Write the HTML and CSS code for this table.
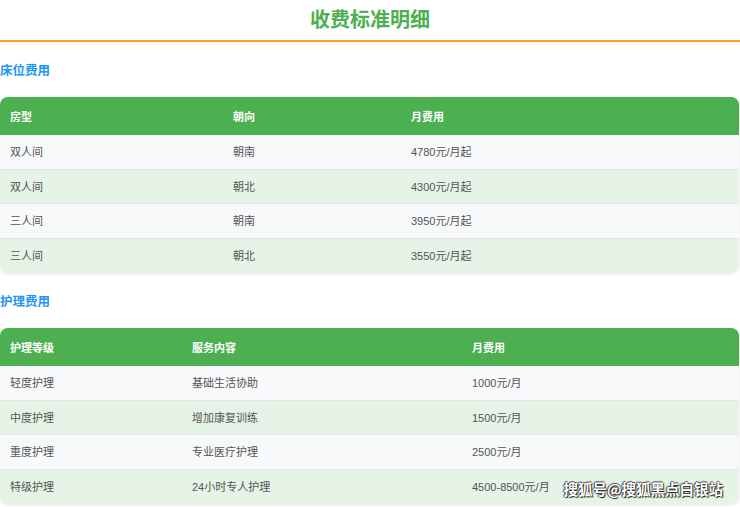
FILE: index.html
```html
<!DOCTYPE html>
<html lang="zh-CN">
<head>
<meta charset="utf-8">
<title>收费标准明细</title>
<link rel="stylesheet" href="styles.css">
</head>
<body>
<div class="page">
  <h1 class="title">收费标准明细</h1>

  <h2 class="section">床位费用</h2>
  <table class="fee">
    <colgroup><col class="c1a"><col class="c1b"><col class="c1c"></colgroup>
    <thead>
      <tr><th>房型</th><th>朝向</th><th>月费用</th></tr>
    </thead>
    <tbody>
      <tr><td>双人间</td><td>朝南</td><td>4780元/月起</td></tr>
      <tr><td>双人间</td><td>朝北</td><td>4300元/月起</td></tr>
      <tr><td>三人间</td><td>朝南</td><td>3950元/月起</td></tr>
      <tr><td>三人间</td><td>朝北</td><td>3550元/月起</td></tr>
    </tbody>
  </table>

  <h2 class="section">护理费用</h2>
  <table class="fee">
    <colgroup><col class="c2a"><col class="c2b"><col class="c2c"></colgroup>
    <thead>
      <tr><th>护理等级</th><th>服务内容</th><th>月费用</th></tr>
    </thead>
    <tbody>
      <tr><td>轻度护理</td><td>基础生活协助</td><td>1000元/月</td></tr>
      <tr><td>中度护理</td><td>增加康复训练</td><td>1500元/月</td></tr>
      <tr><td>重度护理</td><td>专业医疗护理</td><td>2500元/月</td></tr>
      <tr><td>特级护理</td><td>24小时专人护理</td><td>4500-8500元/月</td></tr>
    </tbody>
  </table>

  <div class="watermark">搜狐号@搜狐黑点白银站</div>
</div>
</body>
</html>
```

FILE: styles.css
```css
html, body {
  margin: 0;
  padding: 0;
  background: #ffffff;
}

body {
  font-family: "Liberation Sans", "Noto Sans CJK SC", sans-serif;
  color: #555555;
}

.page {
  position: relative;
  width: 740px;
  height: 507px;
  overflow: hidden;
}

.title {
  margin: 0;
  padding: 5px 0 8px;
  font-family: "Noto Sans CJK SC", sans-serif;
  font-size: 20px;
  line-height: 27px;
  font-weight: 700;
  color: #4caf50;
  text-align: center;
  border-bottom: 2px solid #f5a32b;
}

.section {
  margin: 19px 0 18px;
  font-family: "Noto Sans CJK SC", sans-serif;
  font-size: 12.5px;
  line-height: 18px;
  font-weight: 700;
  color: #2196f3;
}

.fee {
  width: 739px;
  border-collapse: separate;
  border-spacing: 0;
  border-radius: 8px;
  overflow: hidden;
  box-shadow: 0 1px 3px rgba(0, 0, 0, 0.10);
  font-size: 11px;
  table-layout: fixed;
}

.c1a { width: 223px; }
.c1b { width: 178px; }
.c1c { width: auto; }
.c2a { width: 182px; }
.c2b { width: 280px; }
.c2c { width: auto; }

.fee th {
  background: #4caf50;
  color: #ffffff;
  font-weight: 700;
  text-align: left;
  padding: 13px 10px 11px;
  line-height: 14px;
}

.fee td {
  padding: 11px 10px 9.5px;
  line-height: 13px;
  border-bottom: 1px solid #e2e6e2;
  color: #555555;
}

.fee tbody tr:last-child td {
  border-bottom: none;
  padding-bottom: 10.5px;
}

.fee tbody tr:nth-child(odd) td {
  background: #f7f9fa;
}

.fee tbody tr:nth-child(even) td {
  background: #e6f3e7;
}

.watermark {
  position: absolute;
  right: 17px;
  bottom: 9px;
  font-family: "Noto Sans CJK SC", sans-serif;
  font-size: 14.5px;
  line-height: 18px;
  font-weight: 700;
  color: #ffffff;
  text-shadow: 1px 1px 1px #222, -1px 0 1px #444, 0 -1px 1px #444;
}
```
